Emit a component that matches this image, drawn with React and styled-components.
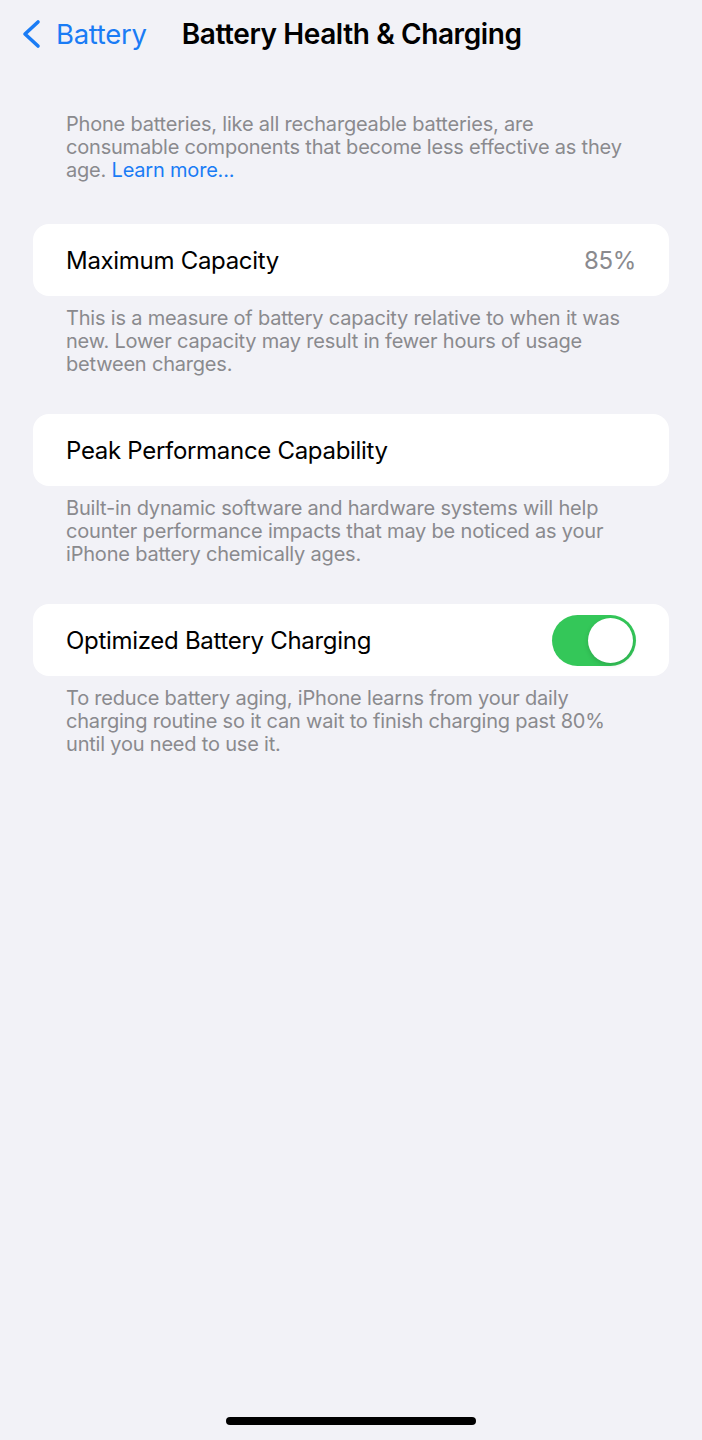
import styled, { createGlobalStyle } from 'styled-components';

const GlobalStyle = createGlobalStyle`
  html, body {
    margin: 0;
    padding: 0;
    background: #f2f2f7;
  }
  body {
    font-family: Inter, "Noto Sans", sans-serif;
    -webkit-font-smoothing: antialiased;
  }
`;

const Screen = styled.div`
  width: 702px;
  height: 1440px;
  background: #f2f2f7;
  display: flex;
  flex-direction: column;
  box-sizing: border-box;
`;

const NavBar = styled.div`
  height: 68px;
  display: flex;
  align-items: center;
  padding-left: 21px;
`;

const BackButton = styled.div`
  display: flex;
  align-items: center;
  gap: 15px;
  color: #1a7cf5;
  font-size: 27.5px;
  letter-spacing: -0.3px;
`;

const NavTitle = styled.div`
  margin-left: 35px;
  font-size: 28px;
  font-weight: 600;
  color: #000;
  letter-spacing: -0.4px;
`;

const Content = styled.div`
  flex: 1;
  padding: 45px 33px 0;
  display: flex;
  flex-direction: column;
`;

const Note = styled.p`
  margin: ${p => p.$top ?? 11}px 0 0;
  padding: 0 33px;
  font-size: 20px;
  line-height: 23px;
  color: #8a8a8e;
  letter-spacing: -0.2px;
`;

const Link = styled.span`
  color: #1a7cf5;
`;

const Card = styled.div`
  margin-top: ${p => p.$top}px;
  height: 72px;
  background: #fff;
  border-radius: 16px;
  display: flex;
  align-items: center;
  justify-content: space-between;
  padding: 0 33px;
`;

const Label = styled.span`
  font-size: 24px;
  color: #000;
  letter-spacing: -0.3px;
`;

const Value = styled.span`
  font-size: 24px;
  color: #8a8a8e;
  letter-spacing: -0.3px;
`;

const Toggle = styled.div`
  width: 84px;
  height: 51px;
  border-radius: 26px;
  background: #34c759;
  display: flex;
  align-items: center;
  justify-content: ${p => (p.$on ? 'flex-end' : 'flex-start')};
  padding: 3px;
  box-sizing: border-box;
`;

const Knob = styled.div`
  width: 45px;
  height: 45px;
  border-radius: 50%;
  background: #fff;
  box-shadow: 0 2px 5px rgba(0, 0, 0, 0.15);
`;

const HomeBar = styled.div`
  align-self: center;
  width: 250px;
  height: 8px;
  border-radius: 4px;
  background: #000;
  margin-bottom: 15px;
`;

const Chevron = () => (
  <svg width="20" height="30" viewBox="0 0 20 30">
    <path
      d="M17 3 L4 15 L17 27"
      fill="none"
      stroke="#1a7cf5"
      strokeWidth="3.6"
      strokeLinecap="round"
      strokeLinejoin="round"
    />
  </svg>
);

export default function App() {
  return (
    <Screen>
      <GlobalStyle />
      <NavBar>
        <BackButton>
          <Chevron />
          Battery
        </BackButton>
        <NavTitle>Battery Health &amp; Charging</NavTitle>
      </NavBar>
      <Content>
        <Note $top={0}>
          Phone batteries, like all rechargeable batteries, are<br />
          consumable components that become less effective as they<br />
          age. <Link>Learn more...</Link>
        </Note>

        <Card $top={42}>
          <Label>Maximum Capacity</Label>
          <Value>85%</Value>
        </Card>
        <Note>
          This is a measure of battery capacity relative to when it was<br />
          new. Lower capacity may result in fewer hours of usage<br />
          between charges.
        </Note>

        <Card $top={38}>
          <Label>Peak Performance Capability</Label>
        </Card>
        <Note>
          Built-in dynamic software and hardware systems will help<br />
          counter performance impacts that may be noticed as your<br />
          iPhone battery chemically ages.
        </Note>

        <Card $top={38}>
          <Label>Optimized Battery Charging</Label>
          <Toggle $on>
            <Knob />
          </Toggle>
        </Card>
        <Note>
          To reduce battery aging, iPhone learns from your daily<br />
          charging routine so it can wait to finish charging past 80%<br />
          until you need to use it.
        </Note>
      </Content>
      <HomeBar />
    </Screen>
  );
}
